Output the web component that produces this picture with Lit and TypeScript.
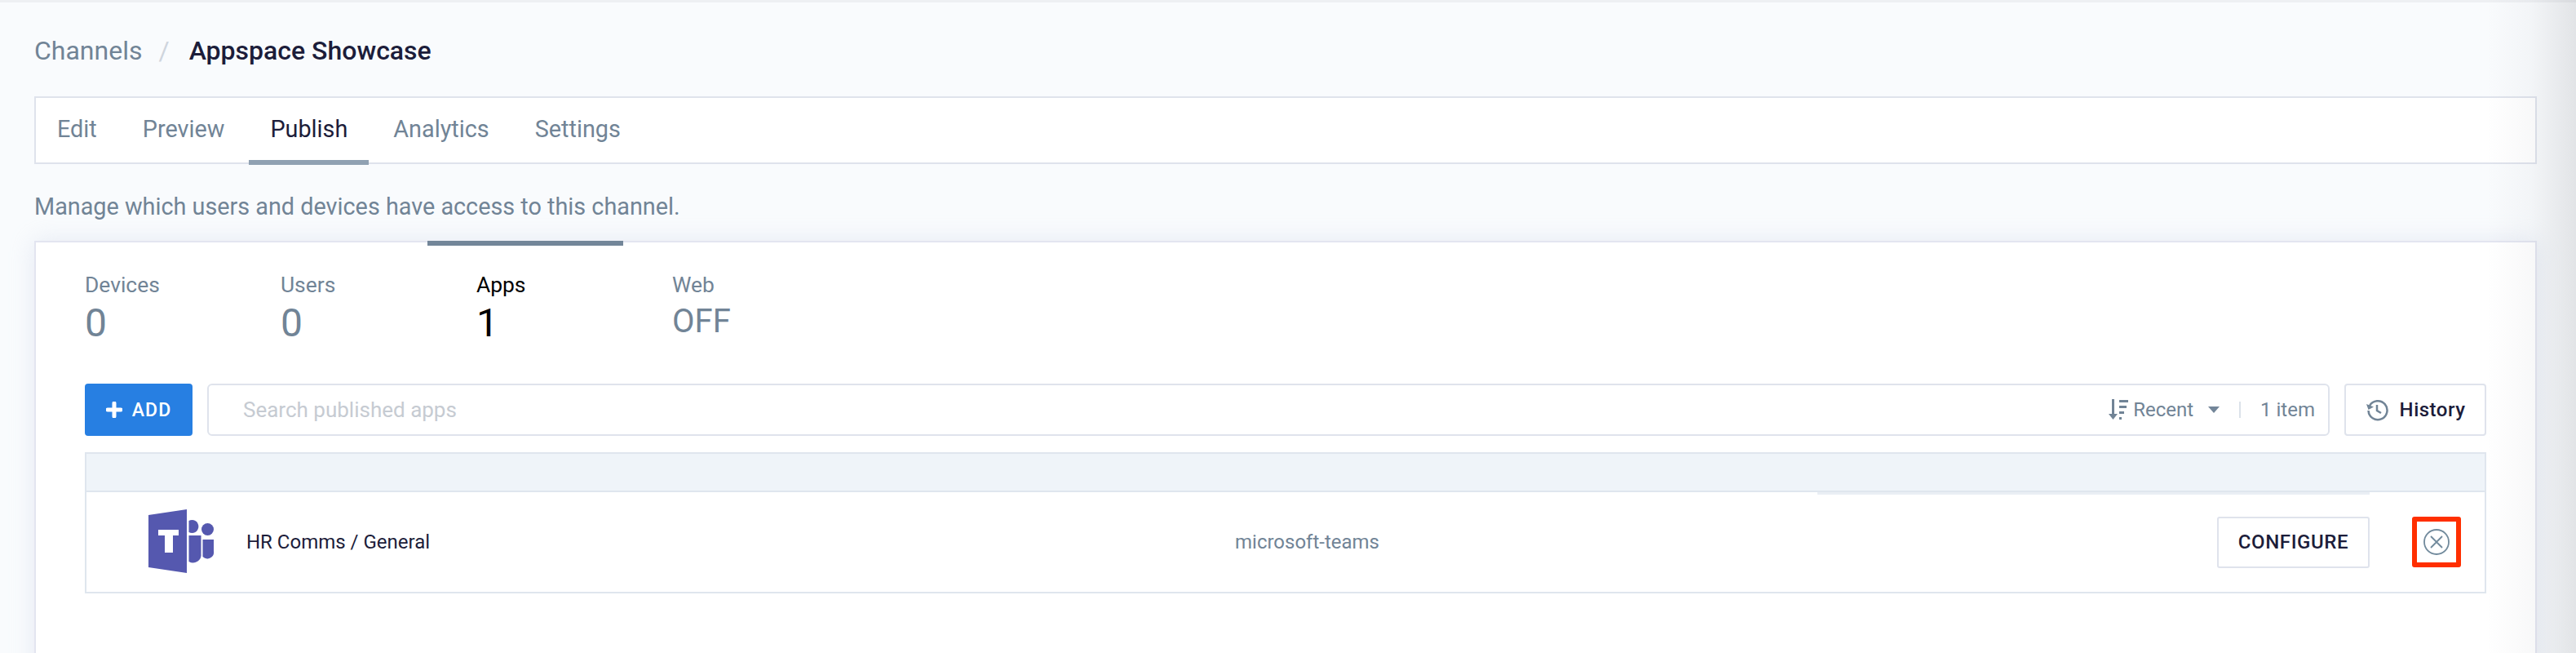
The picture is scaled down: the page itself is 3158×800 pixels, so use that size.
import { LitElement, html, css } from "lit";
import { customElement } from "lit/decorators.js";

@customElement("app-root")
export class AppRoot extends LitElement {
  static styles = css`
    :host { display: block; width: 3158px; height: 800px; overflow: hidden; background: #f9fbfd; font-family: Roboto, "Liberation Sans", sans-serif; color: #718496; position: relative; }
    .edge { position: absolute; right: 0; top: 0; bottom: 0; width: 110px; background: linear-gradient(90deg, rgba(90,95,110,0), rgba(90,95,110,.04) 50%, rgba(70,72,80,.13)); pointer-events: none; }
    .top { position: absolute; left: 0; right: 0; top: 0; height: 3px; background: #eef0f3; }
    .page { padding: 0 48px 0 42px; box-sizing: border-box; }
    .crumbs { display: flex; align-items: center; height: 118px; padding-top: 6px; font-size: 32px; box-sizing: border-box; }
    .crumbs .s { color: #cfd5dd; margin: 0 24px 0 20px; }
    .crumbs .t { color: #1c1d3a; font-weight: 500; }
    .tabs { display: flex; height: 83px; background: #fff; border: 2px solid #dfe3ec; box-sizing: border-box; padding-left: 26px; }
    .tab { font-size: 28.8px; line-height: 76px; margin-right: 56px; position: relative; }
    .tab.on { color: #1c1d3a; }
    .tab.on::after { content: ""; position: absolute; left: -26px; right: -26px; bottom: -3px; height: 6px; background: #90a1b2; }
    .desc { height: 94px; font-size: 28.8px; display: flex; align-items: center; padding-top: 10px; box-sizing: border-box; }
    .card { background: #fff; border: 2px solid #e3e5f0; height: 560px; box-sizing: border-box; padding: 0 0 0 60px; position: relative; box-shadow: 0 0 28px rgba(190,200,225,.32); }
    .stats { display: flex; height: 173px; }
    .stat { width: 240px; padding-top: 36px; position: relative; }
    .stat .l { font-size: 26.4px; line-height: 32px; }
    .stat .v { font-size: 48px; line-height: 54px; margin-top: 4px; }
    .stat .v.off { font-size: 40px; margin-top: 2px; }
    .stat.on { color: #000; }
    .stat.on::before { content: ""; position: absolute; left: -60px; top: -2px; width: 240px; height: 6px; background: #738699; }
    .tools { display: flex; height: 64px; width: 2944px; gap: 18px; }
    .add { width: 132px; background: #277fe2; color: #fff; border-radius: 4px; display: flex; align-items: center; justify-content: center; gap: 12px; font-size: 23px; font-weight: 500; letter-spacing: 1px; }
    .search { flex: 1; border: 2px solid #dfe3ec; border-radius: 6px; display: flex; align-items: center; padding: 0 16px 0 42px; box-sizing: border-box; font-size: 24px; }
    .ph { flex: 1; color: #c6cbd2; font-size: 26px; }
    .sort { display: flex; align-items: center; gap: 6px; }
    .car { width: 0; height: 0; border: 7px solid transparent; border-top: 8px solid #738699; border-bottom: 0; margin: 0 0 0 18px; }
    .bar { width: 2px; height: 20px; background: #dbe2e9; margin: 0 24px 0 24px; }
    .hist { width: 174px; border: 2px solid #dfe3ec; border-radius: 4px; display: flex; align-items: center; justify-content: center; gap: 14px; font-size: 24px; font-weight: 500; color: #1c1d3a; box-sizing: border-box; letter-spacing: .5px; }
    .table { width: 2944px; margin-top: 20px; border: 2px solid #dfe6ee; box-sizing: border-box; height: 173px; }
    .thead { height: 47px; background: #eff4f9; border-bottom: 2px solid #dfe6ee; box-sizing: border-box; }
    .row { display: flex; align-items: center; height: 122px; position: relative; }
    .logo { margin-left: 76px; width: 84px; height: 80px; }
    .name { margin-left: 36px; width: 1212px; color: #1c1d3a; font-size: 24px; }
    .app { flex: 1; font-size: 24px; }
    .conf { width: 187px; height: 63px; border: 2px solid #dfe3ec; border-radius: 3px; box-sizing: border-box; display: flex; align-items: center; justify-content: center; color: #1c1d3a; font-size: 24px; font-weight: 500; letter-spacing: .6px; }
    .x { width: 60px; height: 62px; border: 6px solid #ff2f00; border-radius: 3px; box-sizing: border-box; margin: 0 29px 0 52px; display: flex; align-items: center; justify-content: center; }
    .line { position: absolute; left: 2122px; width: 677px; top: 0; height: 3px; background: #eaeff4; }
  `;

  render() {
    return html`
      <div class="page">
        <div class="crumbs"><span class="c">Channels</span><span class="s">/</span><span class="t">Appspace Showcase</span></div>
        <div class="tabs">
          <div class="tab">Edit</div><div class="tab">Preview</div><div class="tab on">Publish</div><div class="tab">Analytics</div><div class="tab">Settings</div>
        </div>
        <div class="desc">Manage which users and devices have access to this channel.</div>
        <div class="card">
          <div class="stats">
            <div class="stat"><div class="l">Devices</div><div class="v">0</div></div>
            <div class="stat"><div class="l">Users</div><div class="v">0</div></div>
            <div class="stat on"><div class="l">Apps</div><div class="v">1</div></div>
            <div class="stat"><div class="l">Web</div><div class="v off">OFF</div></div>
          </div>
          <div class="tools">
            <div class="add">
              <svg width="20" height="20" viewBox="0 0 20 20"><path d="M10 2v16M2 10h16" stroke="#fff" stroke-width="5" stroke-linecap="round"/></svg>
              <span>ADD</span>
            </div>
            <div class="search">
              <div class="ph">Search published apps</div>
              <div class="sort">
                <svg width="24" height="26" viewBox="0 0 24 26" fill="#718496"><path d="M4 0h3v18h4l-5.500 7L0 18h4z"/><path d="M13 1h11v3H13zM13 8h9v3h-9zM13 15h6v3h-6zM13 22h3v3h-3z"/></svg>
                <span>Recent</span>
              </div>
              <div class="car"></div><div class="bar"></div><span>1 item</span>
            </div>
            <div class="hist">
              <svg width="28" height="28" viewBox="0 0 28 28" fill="none" stroke="#718496" stroke-width="2.500"><path d="M5 9a11.500 11.500 0 1 1-1.500 6"/><path d="M1 7l2.500 7 6.500-3.500z" fill="#718496" stroke="none"/><path d="M14 8v7l5 3"/></svg>
              <span>History</span>
            </div>
          </div>
          <div class="table">
            <div class="thead"></div>
            <div class="row">
              <div class="line"></div>
              <svg class="logo" viewBox="0 0 84 80">
                <path d="M0 7 47 0v78L0 71z" fill="#5558af"/>
                <path d="M12 25h25v7h-7v21H20V32h-8z" fill="#fff"/>
                <path d="M49.500 14a8 8 0 1 1 0 14z" fill="#5558af"/>
                <circle cx="72.500" cy="24.500" r="7.500" fill="#5558af"/>
                <path d="M49.500 32h15v22a10 10 0 0 1-15 10z" fill="#5558af"/>
                <path d="M66.500 37H80v14a8 8 0 0 1-13.500 7z" fill="#5558af"/>
              </svg>
              <div class="name">HR Comms / General</div>
              <div class="app">microsoft-teams</div>
              <div class="conf">CONFIGURE</div>
              <div class="x"><svg width="32" height="32" viewBox="0 0 32 32" fill="none" stroke="#718a9c" stroke-width="1.800"><circle cx="16" cy="16" r="15"/><path d="M9 9l14 14M23 9 9 23"/></svg></div>
            </div>
          </div>
        </div>
      </div>
      <div class="top"></div>
      <div class="edge"></div>
    `;
  }
}
